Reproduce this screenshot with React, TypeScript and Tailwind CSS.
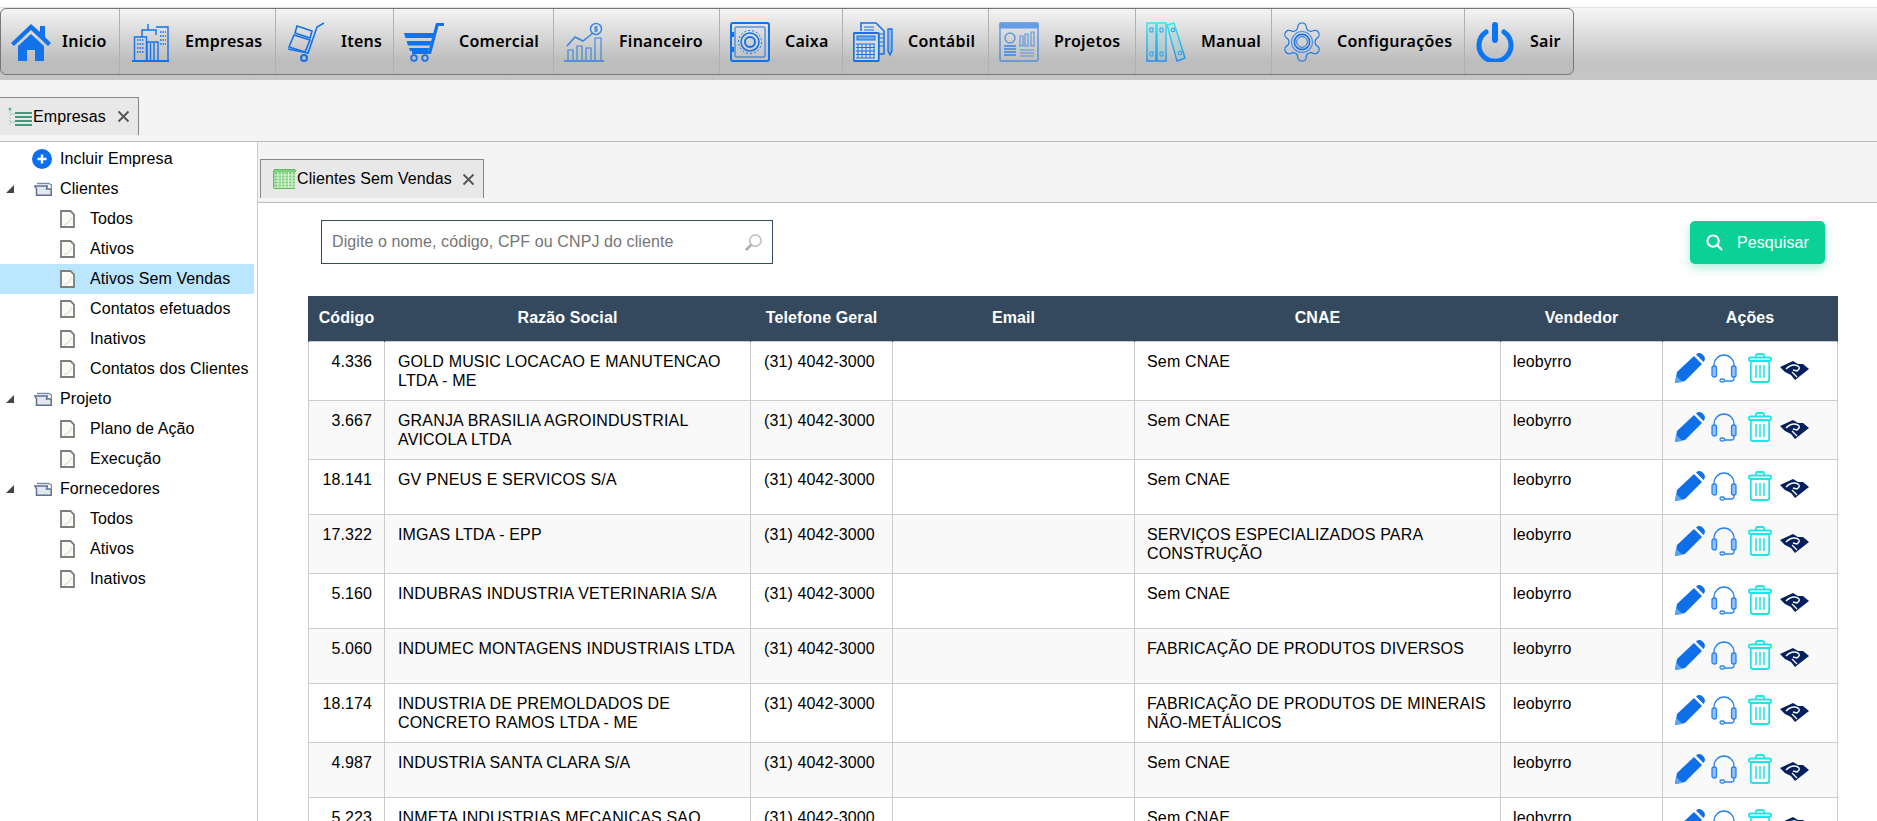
import React from 'react';

const blue = '#1272ea';

function HomeIcon() {
  return (
    <svg viewBox="0 0 40 40" className="w-10 h-10 shrink-0 -mr-[4px]">
      <path d="M0 21 L20 2 L29 10 V4 H34 V15 L40 21 L37 24 L20 8 L3 24Z" fill={blue} />
      <path d="M7 24 L20 12 L33 24 V39 H24 V28 H16 V39 H7Z" fill={blue} />
    </svg>
  );
}

function BuildingsIcon() {
  const dots = [];
  for (let y = 18; y < 34; y += 4) {
    dots.push(<path key={'a' + y} d={`M5 ${y}h7`} strokeDasharray="1.5 1" />);
    dots.push(<path key={'b' + y} d={`M28 ${y - 8}h6`} strokeDasharray="1.5 1" />);
  }
  return (
    <svg viewBox="-2 0 40 40" className="w-10 h-10 shrink-0" fill="none" stroke={blue} strokeWidth="1.4">
      <path d="M0 39h37" strokeWidth="1.8" />
      <path d="M2.500 39V15h12v24M10 15V8h14v5M24 5h12v34H24" />
      <path d="M16 2v6M15 39V20h11v19M18.500 21v18M22 21v18" />
      {dots}
    </svg>
  );
}

function ItensIcon() {
  return (
    <svg viewBox="0 0 40 40" className="w-10 h-10 shrink-0" fill="none" stroke={blue} strokeWidth="1.6">
      <path d="M38 1 L31 5 L22 31 L2 27" />
      <path d="M11 4 L26 9 L24 16 L9 11Z" />
      <path d="M8 13 L24 18 L19 30 L3 25Z" />
      <circle cx="18" cy="36" r="3" strokeWidth="2" />
    </svg>
  );
}

function CartIcon() {
  return (
    <svg viewBox="0 0 40 40" className="w-10 h-10 shrink-0">
      <path d="M32 1h8v3h-5.500L27 32H8v-3h16.500Z" fill={blue} />
      <path d="M0 11h30l-1.500 5H1.500Z M2.500 19h25l-1.500 4.500H4Z M5 26h20l-.8 3H6Z" fill={blue} />
      <circle cx="10" cy="36" r="2.800" fill="none" stroke={blue} strokeWidth="1.800" />
      <circle cx="21" cy="36" r="2.800" fill="none" stroke={blue} strokeWidth="1.800" />
    </svg>
  );
}

function FinanceIcon() {
  return (
    <svg viewBox="0 0 40 40" className="w-10 h-10 shrink-0" fill="none" stroke={blue} strokeWidth="1.100" opacity="0.8">
      <path d="M0 39h40" strokeWidth="1.400" />
      <path d="M4 38V28h5v10M13 38V24h5v14M22 38V26h5v12M31 38V16h6v22" />
      <path d="M3 24 L11 15 L19 19 L29 11" strokeWidth="1.500" />
      <circle cx="32" cy="7" r="5.500" strokeWidth="1.500" />
      <path d="M32 4v6M34 5h-3v2h2v2h-3" />
    </svg>
  );
}

function SafeIcon() {
  return (
    <svg viewBox="0 0 40 40" className="w-10 h-10 shrink-0" fill="none" stroke={blue}>
      <rect x="1" y="1" width="38" height="38" rx="2" strokeWidth="2" />
      <rect x="5" y="5" width="30" height="30" rx="1" strokeWidth="1" />
      <circle cx="20" cy="20" r="9" strokeWidth="1.500" />
      <circle cx="20" cy="20" r="5" strokeWidth="2" />
      <circle cx="20" cy="20" r="11.500" strokeWidth="1" strokeDasharray="2 2" />
      <rect x="0" y="10" width="4" height="5" fill={blue} stroke="none" />
      <rect x="0" y="25" width="4" height="5" fill={blue} stroke="none" />
    </svg>
  );
}

function CalcIcon() {
  const keys = [];
  for (let y = 22; y < 37; y += 3.500) {
    keys.push(<path key={y} d={`M3 ${y}h19`} />);
  }
  for (let x = 5; x < 22; x += 4) {
    keys.push(<path key={'v' + x} d={`M${x} 22v14`} />);
  }
  return (
    <svg viewBox="0 0 40 40" className="w-10 h-10 shrink-0" fill="none" stroke={blue} strokeWidth="1">
      <path d="M8 9V1h15l8 8v23h-5" strokeWidth="1.500" />
      <path d="M11 5h10M11 8h10" />
      <path d="M26 12h5M26 16h5M26 20h5M26 24h5" />
      <path d="M35 7h4v22l-2 4-2-4Z" fill={blue} fillOpacity="0.3" strokeWidth="1.300" />
      <rect x="0.800" y="11" width="25" height="28" rx="1" fill="#dcdcdc" strokeWidth="1.800" />
      <rect x="4" y="14" width="18" height="4" fill={blue} fillOpacity="0.5" />
      {keys}
    </svg>
  );
}

function ProjetosIcon() {
  return (
    <svg viewBox="0 0 40 40" className="w-10 h-10 shrink-0" opacity="0.6" fill="none" stroke={blue}>
      <rect x="1" y="1" width="38" height="38" rx="1.500" strokeWidth="1.500" />
      <rect x="1" y="1" width="38" height="5" fill={blue} />
      <circle cx="11" cy="16" r="5" strokeWidth="1.500" />
      <path d="M5 24h12M5 27h12M5 30h12M5 33h12" strokeWidth="2" />
      <path d="M21 14h3v10h-3ZM26 12h3v12h-3ZM32 10h3v14h-3Z" strokeWidth="1.200" />
      <path d="M21 28h14M21 31h14M21 34h14" strokeWidth="1" />
    </svg>
  );
}

function ManualIcon() {
  return (
    <svg viewBox="0 0 40 40" className="w-10 h-10 shrink-0" fill="none">
      <defs>
        <linearGradient id="manualGrad" x1="0" y1="0" x2="0" y2="1">
          <stop offset="0" stopColor="#2fecec" />
          <stop offset="1" stopColor="#2a8cf0" />
        </linearGradient>
      </defs>
      <path d="M1 1h9v38H1ZM11 1h9v38h-9ZM21 3 L28 1 L39 36 L31 39Z" stroke="url(#manualGrad)" strokeWidth="1.500" fill="#35d5ea" fillOpacity="0.15" />
      <path d="M4 6h3v4H4ZM14 6h3v4h-3ZM4 30h3v4H4ZM14 30h3v4h-3ZM25 7l3-1 1 3-3 1ZM32 30l3-1 1 3-3 1Z" stroke="#2a9ee9" strokeWidth="1" />
    </svg>
  );
}

function GearIcon() {
  return (
    <svg viewBox="1.500 1.500 21 21" className="w-10 h-10 shrink-0" fill="none" stroke={blue} strokeWidth="0.600">
      <path d="M12.220 2h-.44a2 2 0 0 0-2 2v.18a2 2 0 0 1-1 1.730l-.43.25a2 2 0 0 1-2 0l-.15-.08a2 2 0 0 0-2.730.73l-.22.38a2 2 0 0 0 .73 2.730l.15.1a2 2 0 0 1 1 1.720v.51a2 2 0 0 1-1 1.740l-.15.09a2 2 0 0 0-.73 2.730l.22.38a2 2 0 0 0 2.730.73l.15-.08a2 2 0 0 1 2 0l.43.25a2 2 0 0 1 1 1.730V20a2 2 0 0 0 2 2h.44a2 2 0 0 0 2-2v-.18a2 2 0 0 1 1-1.730l.43-.25a2 2 0 0 1 2 0l.15.08a2 2 0 0 0 2.730-.73l.22-.39a2 2 0 0 0-.73-2.730l-.15-.08a2 2 0 0 1-1-1.740v-.5a2 2 0 0 1 1-1.740l.15-.09a2 2 0 0 0 .73-2.730l-.22-.38a2 2 0 0 0-2.730-.73l-.15.08a2 2 0 0 1-2 0l-.43-.25a2 2 0 0 1-1-1.730V4a2 2 0 0 0-2-2z" />
      <circle cx="12" cy="12" r="5.500" opacity="0.7" />
      <circle cx="12" cy="12" r="4" strokeWidth="0.800" />
      <circle cx="12" cy="12" r="2.800" strokeWidth="0.500" />
    </svg>
  );
}

function PowerIcon() {
  return (
    <svg viewBox="0 0 40 40" className="w-10 h-10 shrink-0" fill="none" stroke="#0b76f0" strokeLinecap="round">
      <path d="M11 10 A16 16 0 1 0 29 10" strokeWidth="5" />
      <path d="M20 3v15" strokeWidth="6" />
    </svg>
  );
}

const menuItems = [
  { label: 'Inicio', icon: <HomeIcon />, width: 'w-[119px]' },
  { label: 'Empresas', icon: <BuildingsIcon />, width: 'w-[156px]' },
  { label: 'Itens', icon: <ItensIcon />, width: 'w-[118px]' },
  { label: 'Comercial', icon: <CartIcon />, width: 'w-[160px]' },
  { label: 'Financeiro', icon: <FinanceIcon />, width: 'w-[166px]' },
  { label: 'Caixa', icon: <SafeIcon />, width: 'w-[123px]' },
  { label: 'Contábil', icon: <CalcIcon />, width: 'w-[146px]' },
  { label: 'Projetos', icon: <ProjetosIcon />, width: 'w-[147px]' },
  { label: 'Manual', icon: <ManualIcon />, width: 'w-[136px]' },
  { label: 'Configurações', icon: <GearIcon />, width: 'w-[193px]' },
  { label: 'Sair', icon: <PowerIcon />, width: 'w-[110px]' },
];

function CloseIcon() {
  return (
    <svg viewBox="0 0 13 13" className="w-[13px] h-[13px] shrink-0" stroke="#555" strokeWidth="1.800">
      <path d="M1.500 1.500l10 10M11.500 1.500l-10 10" />
    </svg>
  );
}

function ListIcon() {
  return (
    <svg viewBox="0 0 24 20" className="w-6 h-5 shrink-0">
      <path d="M2 1v17" stroke="#9ccdb8" strokeWidth="1" strokeDasharray="2 1" />
      <circle cx="2" cy="2" r="1.500" fill="#5cae8c" />
      <path d="M2 7h5M2 15h5" stroke="#9ccdb8" strokeWidth="1" />
      <path d="M7 6h17M7 10h17M7 14h17M7 18h17" stroke="#3f9b7a" strokeWidth="2" />
    </svg>
  );
}

function GridIcon() {
  const lines = [];
  for (let i = 5; i < 24; i += 3.500) {
    lines.push(<path key={'v' + i} d={`M${i} 3v16`} />);
  }
  for (let i = 6; i < 20; i += 3) {
    lines.push(<path key={'h' + i} d={`M1 ${i}h21`} />);
  }
  return (
    <svg viewBox="0 0 23 20" className="w-[23px] h-5 shrink-0">
      <rect x="0.500" y="0.500" width="22" height="19" rx="1.500" fill="#7ed07c" stroke="#5fbd5d" />
      <g stroke="#e8f7e6" strokeWidth="0.900">{lines}</g>
    </svg>
  );
}

function PlusIcon() {
  return (
    <svg viewBox="0 0 20 20" className="w-5 h-5 shrink-0">
      <circle cx="10" cy="10" r="10" fill="#0a6ff0" />
      <path d="M10 5.500v9M5.500 10h9" stroke="#fff" strokeWidth="2.400" />
    </svg>
  );
}

function FolderIcon() {
  return (
    <svg viewBox="0 0 18 14" className="w-[18px] h-[14px] shrink-0" fill="none">
      <path d="M3 1.500h11.500l3 1.500v3" stroke="#7c8aa8" strokeWidth="1.300" />
      <path d="M0.800 4h12.500l-.8 3h4.700v6.200H2.500V7Z" fill="#e3e7ef" stroke="#5f6f92" strokeWidth="1.500" />
    </svg>
  );
}

function DocIcon() {
  return (
    <svg viewBox="0 0 15 18" className="w-[15px] h-[18px] shrink-0">
      <path d="M1 1h9.500l3.500 3.500V17H1Z" fill="#fbfbf6" stroke="#7d7d7d" strokeWidth="1.800" />
      <path d="M4 15 Q10 13 12 7" fill="none" stroke="#e6e6e0" strokeWidth="1.500" />
    </svg>
  );
}

function TreeArrow() {
  return (
    <svg viewBox="0 0 8 8" className="w-2 h-2 shrink-0">
      <path d="M8 0V8H0Z" fill="#444" />
    </svg>
  );
}

const tree = [
  { kind: 'add', label: 'Incluir Empresa' },
  { kind: 'folder', label: 'Clientes' },
  { kind: 'leaf', label: 'Todos' },
  { kind: 'leaf', label: 'Ativos' },
  { kind: 'leaf', label: 'Ativos Sem Vendas', active: true },
  { kind: 'leaf', label: 'Contatos efetuados' },
  { kind: 'leaf', label: 'Inativos' },
  { kind: 'leaf', label: 'Contatos dos Clientes' },
  { kind: 'folder', label: 'Projeto' },
  { kind: 'leaf', label: 'Plano de Ação' },
  { kind: 'leaf', label: 'Execução' },
  { kind: 'folder', label: 'Fornecedores' },
  { kind: 'leaf', label: 'Todos' },
  { kind: 'leaf', label: 'Ativos' },
  { kind: 'leaf', label: 'Inativos' },
];

function TreeRow({ item }: { item: (typeof tree)[number] }) {
  return (
    <div className={`flex items-center h-[30px] ${item.active ? 'bg-[#bbe6ff]' : ''}`}>
      {item.kind === 'add' && (
        <div className="flex items-center pl-8 gap-2">
          <PlusIcon />
          <span>{item.label}</span>
        </div>
      )}
      {item.kind === 'folder' && (
        <div className="flex items-center pl-[6px]">
          <TreeArrow />
          <div className="ml-5">
            <FolderIcon />
          </div>
          <span className="ml-2">{item.label}</span>
        </div>
      )}
      {item.kind === 'leaf' && (
        <div className="flex items-center pl-[60px] gap-[15px]">
          <DocIcon />
          <span>{item.label}</span>
        </div>
      )}
    </div>
  );
}

function PencilIcon() {
  return (
    <svg viewBox="0 0 30 30" className="w-[30px] h-[30px] shrink-0">
      <path d="M0 30 L2 19 L19 3 L27 11 L10 28Z" fill="#0e6fe9" />
      <path d="M21 1.500 Q24 -1 27 1 L29 3 Q31 6 28.500 9 Z" fill="#0e6fe9" />
      <path d="M0 30 L1 22.500 L7.500 29Z" fill="#5aa2f2" />
    </svg>
  );
}

function HeadsetIcon() {
  return (
    <svg viewBox="0 0 26 30" className="w-[26px] h-[30px] shrink-0" fill="none" stroke="#2a84ee" strokeWidth="1.300">
      <path d="M3 15V12a10 10 0 0 1 20 0v3" />
      <rect x="1" y="13" width="4.500" height="11" rx="2" fill="#8fc0f7" />
      <rect x="20.500" y="13" width="4.500" height="11" rx="2" fill="#8fc0f7" />
      <path d="M23 24v1.500a2.500 2.500 0 0 1-2.500 2.500H13" />
      <rect x="9" y="26" width="4.500" height="3" rx="1.500" />
    </svg>
  );
}

function TrashIcon() {
  return (
    <svg viewBox="0 0 24 30" className="w-6 h-[30px] shrink-0" fill="none" stroke="#1fe3e8" strokeWidth="1.800">
      <rect x="0.900" y="4.500" width="22.200" height="3.500" rx="1.500" />
      <path d="M8 4.500V2.500a1.500 1.500 0 0 1 1.500-1.500h5a1.500 1.500 0 0 1 1.500 1.500v2" />
      <path d="M2.800 8v19a2 2 0 0 0 2 2h14.400a2 2 0 0 0 2-2V8" />
      <path d="M8 12v13M12 12v13M16 12v13" strokeWidth="1.500" />
    </svg>
  );
}

function ReceitaIcon() {
  return (
    <svg viewBox="0 0 29 19" className="w-[29px] h-[19px] shrink-0">
      <path d="M0 6 L13 0 L18 3 L23 3 L29 8 L15 19 L11 14 L5 11Z" fill="#04205f" />
      <path d="M6 8 Q12 2 18 5 Q21 7 17 10 L13 9" fill="none" stroke="#fff" strokeWidth="1.400" />
      <path d="M12 11 L17 16" fill="none" stroke="#fff" strokeWidth="1.200" />
    </svg>
  );
}

const rows = [
  { code: '4.336', name: 'GOLD MUSIC LOCACAO E MANUTENCAO LTDA - ME', cnae: 'Sem CNAE' },
  { code: '3.667', name: 'GRANJA BRASILIA AGROINDUSTRIAL AVICOLA LTDA', cnae: 'Sem CNAE' },
  { code: '18.141', name: 'GV PNEUS E SERVICOS S/A', cnae: 'Sem CNAE' },
  { code: '17.322', name: 'IMGAS LTDA - EPP', cnae: 'SERVIÇOS ESPECIALIZADOS PARA CONSTRUÇÃO' },
  { code: '5.160', name: 'INDUBRAS INDUSTRIA VETERINARIA S/A', cnae: 'Sem CNAE' },
  { code: '5.060', name: 'INDUMEC MONTAGENS INDUSTRIAIS LTDA', cnae: 'FABRICAÇÃO DE PRODUTOS DIVERSOS' },
  { code: '18.174', name: 'INDUSTRIA DE PREMOLDADOS DE CONCRETO RAMOS LTDA - ME', cnae: 'FABRICAÇÃO DE PRODUTOS DE MINERAIS NÃO-METÁLICOS' },
  { code: '4.987', name: 'INDUSTRIA SANTA CLARA S/A', cnae: 'Sem CNAE' },
  { code: '5.223', name: 'INMETA INDUSTRIAS MECANICAS SAO JOSE LTDA', cnae: 'Sem CNAE' },
];

const thClass = 'border-x border-[#34495e] font-bold text-white text-center h-[45px] px-2';
const tdClass = 'border border-[#cccccc] align-top px-3 pt-[10px] pb-[10px] leading-[19px]';

export default function App() {
  return (
    <div className="h-[821px] overflow-hidden flex flex-col bg-white text-black text-[16px] tracking-[0.1px] font-['Liberation_Sans',Arial,sans-serif]">
      <header className="mt-[7px] h-[73px] shrink-0 bg-gradient-to-b from-[#f6f6f6] via-[#c4c4c4] via-75% to-[#c6c6c6] border-t border-[#e4e4e4]">
        <nav className="flex h-[67px] w-[1574px] border border-[#777] rounded-md bg-gradient-to-b from-[#f4f4f4] to-[#bdbdbd] to-80%">
          {menuItems.map((m) => (
            <div key={m.label} className={`${m.width} flex items-center gap-[15px] pl-[10px] border-r border-[#b0b0b0] last:border-r-0 shrink-0`}>
              {m.icon}
              <span className="-mt-[2px] font-['Noto_Sans',sans-serif] font-semibold text-[16px] tracking-[0.25px]">{m.label}</span>
            </div>
          ))}
        </nav>
      </header>

      <div className="h-[62px] shrink-0 bg-[#f4f4f4] border-b border-[#bbbbbb] flex items-end pb-[6px]">
        <div className="w-[139px] h-[38px] flex items-center pl-2 bg-[#e8e8e8] border border-l-0 border-b-0 border-[#888]">
          <ListIcon />
          <span className="ml-px">Empresas</span>
          <div className="ml-[11px]">
            <CloseIcon />
          </div>
        </div>
      </div>

      <div className="flex flex-1 min-h-0">
        <aside className="w-[258px] shrink-0 border-r border-[#cccccc] pt-[2px] pr-[3px]">
          {tree.map((t, i) => (
            <TreeRow key={i} item={t} />
          ))}
        </aside>

        <main className="flex-1 min-w-0">
          <div className="h-[61px] bg-[#f4f4f4] border-b border-[#bbbbbb] flex items-end pl-[2px] pb-[4px]">
            <div className="w-[224px] h-[39px] flex items-center pl-3 bg-[#e8e8e8] border border-b-0 border-[#888]">
              <GridIcon />
              <span className="ml-px">Clientes Sem Vendas</span>
              <div className="ml-[10px]">
                <CloseIcon />
              </div>
            </div>
          </div>

          <div className="pl-[50px] pr-[40px]">
            <div className="flex justify-between items-start mt-[17px] pl-[13px] pr-3">
              <div className="w-[452px] h-[44px] border border-[#34495e] flex items-center justify-between pl-[10px] pr-[9px]">
                <span className="text-[#757575]">Digite o nome, código, CPF ou CNPJ do cliente</span>
                <svg viewBox="0 0 20 20" className="w-[19px] h-[19px]" fill="none">
                  <circle cx="12" cy="8" r="6" stroke="#c4c4c4" strokeWidth="1.800" />
                  <path d="M7.500 12.500L2 18" stroke="#aaaaaa" strokeWidth="2.600" />
                </svg>
              </div>
              <button className="w-[135px] h-[43px] mt-px rounded-[5px] bg-[#0bd197] text-white flex items-center justify-center gap-[14px] shadow-[0_4px_10px_rgba(11,209,151,0.35)]">
                <svg viewBox="0 0 18 18" className="w-[17px] h-[17px]" fill="none" stroke="#fff" strokeWidth="2.200">
                  <circle cx="7.500" cy="7.500" r="6" />
                  <path d="M12 12l5 5" />
                </svg>
                Pesquisar
              </button>
            </div>

            <table className="w-full table-fixed border-collapse mt-[32px]">
              <colgroup>
                <col className="w-[76px]" />
                <col className="w-[366px]" />
                <col className="w-[142px]" />
                <col className="w-[242px]" />
                <col className="w-[366px]" />
                <col className="w-[162px]" />
                <col className="w-[175px]" />
              </colgroup>
              <thead>
                <tr className="bg-[#34495e]">
                  <th className={thClass}>Código</th>
                  <th className={thClass}>Razão Social</th>
                  <th className={thClass}>Telefone Geral</th>
                  <th className={thClass}>Email</th>
                  <th className={thClass}>CNAE</th>
                  <th className={thClass}>Vendedor</th>
                  <th className={thClass}>Ações</th>
                </tr>
              </thead>
              <tbody>
                {rows.map((r, i) => (
                  <tr key={r.code} className={i % 2 === 1 ? 'bg-[#f9f9f9]' : 'bg-white'}>
                    <td className={`${tdClass} text-right`}>{r.code}</td>
                    <td className={`${tdClass} pl-[13px] tracking-[0.17px]`}>{r.name}</td>
                    <td className={`${tdClass} pl-[13px]`}>(31) 4042-3000</td>
                    <td className={tdClass}></td>
                    <td className={`${tdClass} tracking-[0.17px]`}>{r.cnae}</td>
                    <td className={tdClass}>leobyrro</td>
                    <td className="border border-[#cccccc] align-top pl-[12px] pt-[9px] pb-[10px]">
                      <div className="flex items-center gap-[6px] h-[35px]">
                        <PencilIcon />
                        <HeadsetIcon />
                        <div className="ml-[5px]">
                          <TrashIcon />
                        </div>
                        <div className="ml-[2px] mt-[4px]">
                          <ReceitaIcon />
                        </div>
                      </div>
                    </td>
                  </tr>
                ))}
              </tbody>
            </table>
          </div>
        </main>
      </div>
    </div>
  );
}
